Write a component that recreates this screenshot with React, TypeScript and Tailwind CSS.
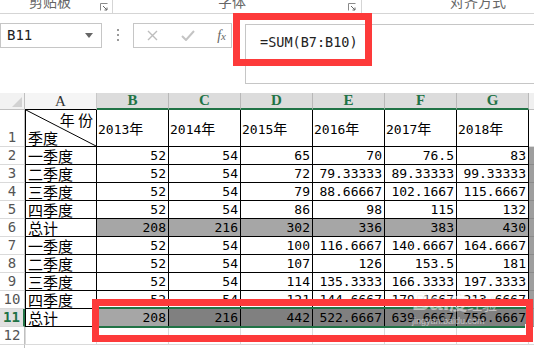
import React from "react";

const mono = "font-['DejaVu_Sans_Mono','Noto_Sans_CJK_SC',monospace]";
const cjk = "font-['Noto_Sans_CJK_SC',sans-serif]";

type Val = string | number;

const rows: { label: string; vals: Val[]; total?: boolean; selected?: boolean }[] = [
  { label: "一季度", vals: [52, 54, 65, 70, "76.5", 83] },
  { label: "二季度", vals: [52, 54, 72, "79.33333", "89.33333", "99.33333"] },
  { label: "三季度", vals: [52, 54, 79, "88.66667", "102.1667", "115.6667"] },
  { label: "四季度", vals: [52, 54, 86, 98, 115, 132] },
  { label: "总计", vals: [208, 216, 302, 336, 383, 430], total: true },
  { label: "一季度", vals: [52, 54, 100, "116.6667", "140.6667", "164.6667"] },
  { label: "二季度", vals: [52, 54, 107, 126, "153.5", 181] },
  { label: "三季度", vals: [52, 54, 114, "135.3333", "166.3333", "197.3333"] },
  { label: "四季度", vals: [52, 54, 121, "144.6667", "179.1667", "213.6667"] },
  { label: "总计", vals: [208, 216, 442, "522.6667", "639.6667", "756.6667"], total: true, selected: true },
];

const years = ["2013年", "2014年", "2015年", "2016年", "2017年", "2018年"];
const cols = ["B", "C", "D", "E", "F", "G"];

function Launcher() {
  return (
    <svg width="8" height="8" viewBox="0 0 8 8" className="mt-[3px]">
      <path d="M0.5 7.5V0.5H7.5" fill="none" stroke="#8a8a8a" />
      <path d="M3 3L7 7M7 4.5V7H4.5" fill="none" stroke="#666" />
    </svg>
  );
}

function RowNum({ n, active, h }: { n: number; active?: boolean; h: string }) {
  return (
    <div
      className={`${h} w-[25px] shrink-0 flex items-end justify-center border-b border-[#dadada] ${mono} text-[14px] leading-[17px] ${
        active
          ? "bg-[#e1e1e1] text-[#217346] font-bold border-r-2 border-r-[#217346]"
          : "bg-white text-[#555] border-r border-r-[#c0c0c0]"
      }`}
    >
      {n}
    </div>
  );
}

export default function App() {
  return (
    <div className="relative w-[534px] h-[348px] overflow-hidden bg-white">
      {/* ribbon group labels, cut off at the top */}
      <div className="flex h-[14px] border-b border-[#d5d5d5] overflow-hidden text-[#666] text-[14px] leading-none">
        <div className={`w-[113px] flex justify-between pl-[29px] pr-[4px] border-r border-[#d5d5d5] ${cjk}`}>
          <span className="-mt-[6px]">剪贴板</span>
          <Launcher />
        </div>
        <div className={`w-[249px] flex justify-between pl-[105px] pr-[5px] border-r border-[#d5d5d5] ${cjk}`}>
          <span className="-mt-[6px]">字体</span>
          <Launcher />
        </div>
        <div className={`flex-1 pl-[88px] ${cjk}`}>
          <span className="-mt-[6px] block">对齐方式</span>
        </div>
      </div>

      {/* name box + formula bar */}
      <div className="flex h-[79px] items-start">
        <div className="mt-[9px] w-[102px] h-[25px] border border-[#c6c6c6] flex items-center justify-between pl-[6px] pr-[8px]">
          <span className={`${mono} text-[14px] text-[#222]`}>B11</span>
          <svg width="8" height="5" viewBox="0 0 8 5">
            <path d="M0 0H8L4 5Z" fill="#666" />
          </svg>
        </div>
        <div className="w-[31px] mt-[15px] flex flex-col items-center gap-[3px]">
          <span className="w-[2px] h-[2px] bg-[#9a9a9a]" />
          <span className="w-[2px] h-[2px] bg-[#9a9a9a]" />
          <span className="w-[2px] h-[2px] bg-[#9a9a9a]" />
        </div>
        <div className="mt-[9px] w-[99px] h-[25px] border border-[#c6c6c6] flex items-center justify-between pl-[13px] pr-[5px]">
          <svg width="11" height="11" viewBox="0 0 11 11">
            <path d="M1 1L10 10M10 1L1 10" stroke="#bdbdbd" strokeWidth="1.4" />
          </svg>
          <svg width="14" height="11" viewBox="0 0 14 11">
            <path d="M1 6L5 10L13 1" fill="none" stroke="#c4c4c4" strokeWidth="2" />
          </svg>
          <span className="font-['Liberation_Serif',serif] italic text-[14px] text-[#666] leading-none">
            f<span className="text-[11px]">x</span>
          </span>
        </div>
        <div className="ml-[13px] mt-[10px] flex-1 h-[60px] border-l border-t border-b border-[#c6c6c6] pl-[14px] pt-[4px]">
          <span className={`${mono} text-[13.5px] text-[#222]`}>=SUM(B7:B10)</span>
        </div>
      </div>

      {/* sheet */}
      <div className="flex flex-col">
        {/* column header */}
        <div className="flex h-[17px]">
          <div className="w-[25px] shrink-0 bg-[#f2f2f2] border-r border-b border-[#c0c0c0] flex items-end justify-end pr-[2px] pb-[2px]">
            <svg width="10" height="10" viewBox="0 0 10 10">
              <path d="M10 0V10H0Z" fill="#d2d2d2" />
            </svg>
          </div>
          <div className="w-[72px] shrink-0 bg-[#f5f5f5] border-r border-[#c8c8c8] border-b border-b-black flex justify-center items-end font-['Liberation_Serif',serif] text-[15px] leading-[16px] text-[#333]">
            A
          </div>
          {cols.map((c) => (
            <div
              key={c}
              className="w-[72px] shrink-0 bg-[#dcdcdc] border-r border-[#b8b8b8] border-b-2 border-b-[#217346] flex justify-center items-end font-['Liberation_Serif',serif] font-bold text-[15px] leading-[15px] text-[#217346]"
            >
              {c}
            </div>
          ))}
          <div className="flex-1 bg-[#f0f0f0] border-b border-[#c0c0c0]" />
        </div>

        {/* row 1 */}
        <div className="flex h-[37px]">
          <RowNum n={1} h="h-[37px]" />
          <div className="relative w-[72px] shrink-0 border-x border-b border-black overflow-hidden">
            <svg className="absolute inset-0" width="70" height="36" viewBox="0 0 70 36">
              <path d="M0 0L70 36" stroke="#000" strokeWidth="1" />
            </svg>
            <span className={`absolute right-[3px] top-[1px] ${cjk} text-[15px] leading-[17px]`}>年 份</span>
            <span className={`absolute left-[2px] bottom-[0px] ${cjk} text-[15px] leading-[17px]`}>季度</span>
          </div>
          {years.map((y) => (
            <div key={y} className="w-[72px] shrink-0 border-r border-b border-black flex items-center pl-[1px]">
              <span className={`${mono} text-[13px] leading-none`}>
                {y.slice(0, 4)}
                <span className={`${cjk} text-[14px]`}>年</span>
              </span>
            </div>
          ))}
          <div className="flex-1 border-b border-[#dadada]" />
        </div>

        {/* data rows */}
        {rows.map((r, i) => (
          <div key={i} className="flex h-[18px]">
            <RowNum n={i + 2} active={r.selected} h="h-[18px]" />
            <div className={`w-[72px] shrink-0 border-x border-b border-black pl-[2px] ${cjk} text-[15px] leading-[17px]`}>
              {r.label}
            </div>
            {r.vals.map((v, j) => (
              <div
                key={j}
                className={`w-[72px] shrink-0 border-r border-b border-black flex items-end justify-end pr-[2px] ${mono} text-[13px] leading-[16px] ${
                  r.selected ? (j === 0 ? "bg-[#a6a6a6]" : "bg-[#808080]") : r.total ? "bg-[#a6a6a6]" : ""
                }`}
              >
                {v}
              </div>
            ))}
            <div className="flex-1 bg-[#9e9e9e] border-b border-[#8a8a8a]" />
          </div>
        ))}

        {/* row 12 */}
        <div className="flex h-[18px]">
          <RowNum n={12} h="h-[18px]" />
          <div className="w-[72px] shrink-0 border-x border-b border-[#dadada]" />
          {cols.map((c) => (
            <div key={c} className="w-[72px] shrink-0 border-r border-b border-[#dadada]" />
          ))}
          <div className="flex-1 border-b border-[#dadada]" />
        </div>
        <div className="flex h-[4px]">
          <div className="w-[25px] border-r border-[#c0c0c0]" />
        </div>
      </div>

      {/* selection outline B11:G11 */}
      <div className="absolute left-[95px] top-[307px] w-[435px] h-[21px] border-2 border-[#217346]" />
      <div className="absolute left-[525px] top-[324px] w-[6px] h-[6px] bg-[#217346] border border-white" />

      {/* watermark */}
      <div className="absolute left-[412px] top-[290px] flex flex-col items-start opacity-50 pointer-events-none">
        <span className="font-['Liberation_Sans',sans-serif] font-bold text-[24px] leading-none text-white [text-shadow:0_0_1px_#888]">
          Bai<span className={`${cjk} text-[18px]`}>度</span>
          <span className={`${cjk} text-[15px] font-normal`}>经验</span>
        </span>
        <span className="font-['Liberation_Sans',sans-serif] text-[9px] leading-none mt-[3px] text-white [text-shadow:0_0_1px_#888]">
          jingyan.baidu.com
        </span>
      </div>

      {/* red highlight boxes */}
      <div className="absolute left-[233px] top-[13px] w-[139px] h-[53px] border-[7px] border-[#fd3a3a]" />
      <div className="absolute left-[92px] top-[299px] w-[441px] h-[43px] border-[7px] border-[#fd3a3a]" />
    </div>
  );
}
